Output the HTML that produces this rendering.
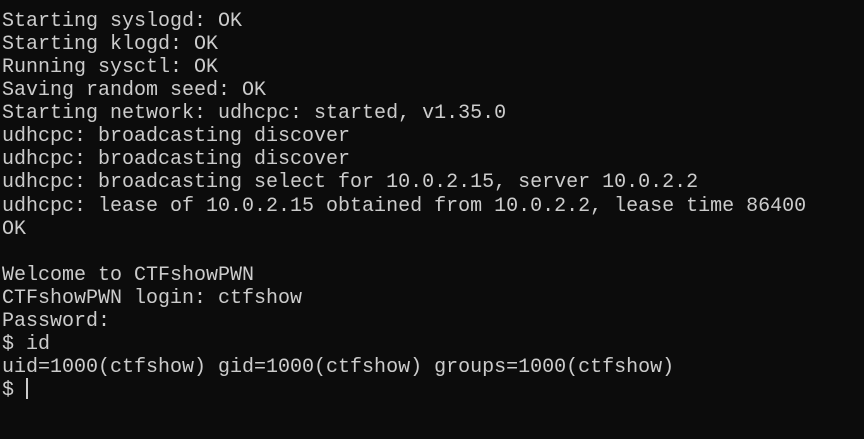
<html><head><style>
body{margin:0;background:#0c0c0c;width:864px;height:439px;overflow:hidden}
pre{margin:0;position:absolute;left:2px;top:10px;font-family:"Liberation Mono",monospace;font-size:20px;line-height:23.07px;color:#cccccc}
.c{position:absolute;left:26px;top:378px;width:2px;height:21px;background:#cccccc}
</style></head><body><pre>Starting syslogd: OK
Starting klogd: OK
Running sysctl: OK
Saving random seed: OK
Starting network: udhcpc: started, v1.35.0
udhcpc: broadcasting discover
udhcpc: broadcasting discover
udhcpc: broadcasting select for 10.0.2.15, server 10.0.2.2
udhcpc: lease of 10.0.2.15 obtained from 10.0.2.2, lease time 86400
OK

Welcome to CTFshowPWN
CTFshowPWN login: ctfshow
Password:
$ id
uid=1000(ctfshow) gid=1000(ctfshow) groups=1000(ctfshow)
$ </pre><div class="c"></div></body></html>
